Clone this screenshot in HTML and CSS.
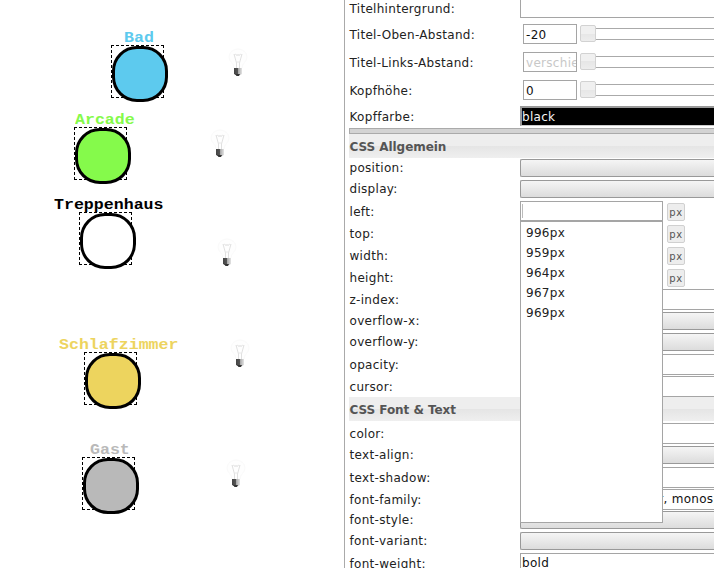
FILE: index.html
```
<!DOCTYPE html>
<html lang="de">
<head>
<meta charset="utf-8">
<title>Widget-Editor</title>
<link rel="stylesheet" href="styles.css">
</head>
<body>
<svg class="defs" width="0" height="0">
  <defs>
    <linearGradient id="base"><stop offset="0" stop-color="#444"/><stop offset=".45" stop-color="#555"/><stop offset=".55" stop-color="#aaa"/><stop offset="1" stop-color="#e4e4e4"/></linearGradient>
    <symbol id="bulb" viewBox="0 0 20 30">
      <path d="M6 20C6 15 1 14 1 9a9 8 0 0 1 18 0c0 5-5 6-5 11" fill="#fefefe" stroke="#fafafa"/>
      <path d="M8.500 20V15L6 6M11.500 20V15L14 6" fill="none" stroke="#d8d8d8" stroke-width=".8"/>
      <path d="M6 7l2-1 1 2 1-2 1 2 1-2 2 1M8.500 14h3" fill="none" stroke="#e2e2e2" stroke-width=".8"/>
      <path d="M6 20h8v6l-2 1H8L6 26z" fill="url(#base)"/>
      <path d="M7 26h5l-1 2H8.500z" fill="#333"/>
    </symbol>
  </defs>
</svg>
<div class="app">
  <main class="plan">
    <div class="room bad"><span class="name">Bad</span><i class="disc"></i></div>
    <div class="room arcade"><span class="name">Arcade</span><i class="disc"></i></div>
    <div class="room treppenhaus"><span class="name">Treppenhaus</span><i class="disc"></i></div>
    <div class="room schlafzimmer"><span class="name">Schlafzimmer</span><i class="disc"></i></div>
    <div class="room gast"><span class="name">Gast</span><i class="disc"></i></div>
    <svg class="bulb b1"><use href="#bulb"/></svg>
    <svg class="bulb b2"><use href="#bulb"/></svg>
    <svg class="bulb b3"><use href="#bulb"/></svg>
    <svg class="bulb b4"><use href="#bulb"/></svg>
    <svg class="bulb b5"><use href="#bulb"/></svg>
  </main>
  <aside class="panel">
    <div class="row first"><span class="label">Titelhintergrund:</span><div class="field"></div></div>
    <div class="row slide"><span class="label">Titel-Oben-Abstand:</span><div class="num">-20</div><div class="slider"><i class="handle"></i></div></div>
    <div class="row slide"><span class="label">Titel-Links-Abstand:</span><div class="num hint">verschieden</div><div class="slider"><i class="handle"></i></div></div>
    <div class="row slide"><span class="label">Kopfhöhe:</span><div class="num">0</div><div class="slider"><i class="handle"></i></div></div>
    <div class="row colorrow"><span class="label">Kopffarbe:</span><div class="field dark">black</div></div>
    <div class="divider"></div>
    <h2 class="head">CSS Allgemein</h2>
    <div class="row short"><span class="label">position:</span><div class="select"></div></div>
    <div class="row short"><span class="label">display:</span><div class="select"></div></div>
    <div class="row"><span class="label">left:</span>
      <div class="combo"><i class="caret"></i>
        <div class="menu"><div>996px</div><div>959px</div><div>964px</div><div>967px</div><div>969px</div></div>
      </div><span class="unit">px</span></div>
    <div class="row"><span class="label">top:</span><div class="combo"></div><span class="unit">px</span></div>
    <div class="row"><span class="label">width:</span><div class="combo"></div><span class="unit">px</span></div>
    <div class="row"><span class="label">height:</span><div class="combo"></div><span class="unit">px</span></div>
    <div class="row extra"><span class="label">z-index:</span><div class="field"></div></div>
    <div class="row short"><span class="label">overflow-x:</span><div class="select"></div></div>
    <div class="row short"><span class="label">overflow-y:</span><div class="select"></div></div>
    <div class="row"><span class="label">opacity:</span><div class="field"></div></div>
    <div class="row"><span class="label">cursor:</span><div class="field"></div></div>
    <h2 class="head second">CSS Font &amp; Text</h2>
    <div class="row extra"><span class="label">color:</span><div class="field"></div></div>
    <div class="row short"><span class="label">text-align:</span><div class="select"></div></div>
    <div class="row"><span class="label">text-shadow:</span><div class="field"></div></div>
    <div class="row"><span class="label">font-family:</span><div class="field family">Courier New, Courier, monospace</div></div>
    <div class="row short"><span class="label">font-style:</span><div class="select"></div></div>
    <div class="row short"><span class="label">font-variant:</span><div class="select"></div></div>
    <div class="row"><span class="label">font-weight:</span><div class="field">bold</div></div>
  </aside>
</div>
</body>
</html>
```
FILE: styles.css
```
* { box-sizing: border-box; }
body { margin: 0; background: #fff; overflow: hidden; }
.defs { position: absolute; }
.app { display: flex; width: 714px; height: 568px; overflow: hidden; }

/* floor plan canvas */
.plan { position: relative; flex: 0 0 344px; }
.room { position: absolute; width: 53px; height: 53px; border: 1px dashed #000; }
.disc { position: absolute; left: 0; top: 0; width: 56px; height: 56px; border: 3px solid #000; border-radius: 25px; background: currentColor; }
.name { position: absolute; bottom: 49px; font: bold 16.6px/18px "Liberation Mono", monospace; white-space: nowrap; transform: scaleY(.85); }
.bad { left: 111px; top: 45px; color: #5dcaee; }
.arcade { left: 74px; top: 127px; color: #85fa4b; }
.treppenhaus { left: 79px; top: 212px; color: #000; }
.treppenhaus .disc { background: #fff; }
.schlafzimmer { left: 84px; top: 352px; color: #edd45e; }
.gast { left: 82px; top: 457px; color: #b9b9b9; }
.bad .name { left: 12px; }
.arcade .name { left: 0; }
.treppenhaus .name { left: -26px; }
.schlafzimmer .name { left: -26px; }
.gast .name { left: 7px; }
.bulb { position: absolute; width: 20px; height: 30px; }
.b1 { left: 228px; top: 48px; }
.b2 { left: 210px; top: 129px; }
.b3 { left: 217px; top: 238px; }
.b4 { left: 230px; top: 339px; }
.b5 { left: 226px; top: 459px; }

/* property panel */
.panel { flex: 1; min-width: 0; padding-left: 4px; border-left: 1px solid #aaa; font: 12px/18px "DejaVu Sans", sans-serif; letter-spacing: .3px; color: #222; white-space: nowrap; }
.row { display: flex; height: 22px; padding-top: 1px; }
.label { flex: 0 0 171px; padding-left: .5px; line-height: 22px; }
.field { flex: 1; height: 21px; padding-left: 1px; border: 1px solid #a5a5a5; border-right: 0; overflow: hidden; color: #111; }
.short { height: 21px; }
.short .label { line-height: 19px; }
.extra { height: 23px; }
.select { flex: 1; height: 18px; border: 1px solid #999; border-right: 0; border-radius: 2px 0 0 2px; background: linear-gradient(#f5f5f5, #dcdcdc); }
.first { height: 20px; padding: 0; }
.first .label { line-height: 18px; }
.first .field { height: 18px; border-top: 0; }
.slide { height: 28px; padding-top: 4px; }
.num { width: 54px; height: 20px; margin-left: 3px; padding-left: 2px; border: 1px solid #a5a5a5; overflow: hidden; color: #111; line-height: 20px; }
.hint { color: #c8c8c8; }
.slider { flex: 1; position: relative; height: 12px; margin: 4px 0 0 3px; border: solid #aaa; border-width: 1px 0; }
.handle { position: absolute; left: 0; top: -4px; width: 16px; height: 17px; border: 1px solid #d2d2d2; border-radius: 2px; background: linear-gradient(#f0f0f0 50%, #e6e6e6 50%, #ededed); }
.colorrow { height: 24px; padding-top: 2px; }
.dark { height: 20px; padding-left: 0; border: solid #999; border-width: 2px 0 1px 2px; border-bottom-color: #ccc; background: #000; color: #f5f5f5; line-height: 18px; }
.divider { height: 6px; border: 1px solid #aaa; border-right: 0; background: #d3d3d3; }
.head { height: 24px; margin: 0; padding-left: .5px; background: linear-gradient(#eeeeee 50%, #e5e5e5 51%, #efefef); font: bold 12px/26px "DejaVu Sans", sans-serif; letter-spacing: -.05px; color: #555; }
.second { margin-bottom: 1px; }
.combo { position: relative; width: 143px; height: 20px; border: 1px solid #a5a5a5; }
.caret { display: block; width: 1px; height: 14px; margin: 2px 0 0 1px; background: #bbb; }
.menu { position: absolute; z-index: 2; left: -1px; top: 19px; width: 143px; height: 302px; padding: 1px 5px; border: 1px solid #a5a5a5; background: #fff; line-height: 20px; }
.unit { width: 18px; height: 18px; margin: 2px 0 0 4px; border: 1px solid #d0d0d0; border-radius: 2px; background: #ededed; color: #555; font-size: 10px; line-height: 18px; text-align: center; letter-spacing: .6px; }
.family { padding-left: 11px; }
```
